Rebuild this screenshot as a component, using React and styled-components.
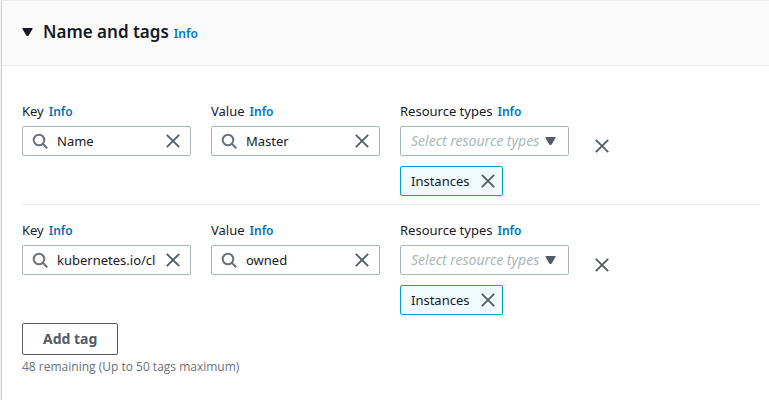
import React, { useState } from "react";
import styled, { createGlobalStyle } from "styled-components";

const GlobalStyle = createGlobalStyle`
  *, *::before, *::after { box-sizing: border-box; }
  body {
    margin: 0;
    background: #fff;
    color: #16191f;
    font-family: "Noto Sans", "Open Sans", sans-serif;
    font-size: 13px;
    line-height: 20px;
  }
  button, input, select { font: inherit; color: inherit; }
`;

const Page = styled.main`
  background: #f2f3f3;
  padding-left: 1px;
`;

const Panel = styled.section`
  min-height: 100vh;
  background: #fff;
  border-top: 1px solid #eaeded;
  border-left: 1px solid #c9cfcf;
`;

const PanelHeader = styled.header`
  display: flex;
  align-items: center;
  gap: 10px;
  height: 65px;
  padding: 0 20px 2px;
  background: #fafafa;
  border-bottom: 1px solid #eaeded;
`;

const IconButton = styled.button`
  display: flex;
  flex: none;
  padding: 0;
  border: 0;
  background: none;
  color: ${(p) => p.$color || "#545b64"};
  cursor: pointer;
`;

const Heading = styled.div`
  display: flex;
  align-items: baseline;
  gap: 5px;
`;

const Title = styled.h2`
  margin: 0;
  font-size: 17px;
  line-height: 24px;
  font-weight: 600;
`;

const InfoLink = styled.a`
  color: #0073bb;
  font-size: 12px;
  font-weight: 600;
  text-decoration: none;
`;

const PanelBody = styled.div`
  padding: 35px 10px 20px 20px;
`;

const TagRow = styled.div`
  display: grid;
  grid-template-columns: repeat(4, minmax(0, 1fr));
  column-gap: 20px;
  padding-right: 1px;
  padding-bottom: 8px;
  & + & {
    border-top: 1px solid #eaeded;
    padding-top: 15px;
  }
`;

const LabelLine = styled.div`
  display: flex;
  align-items: baseline;
  gap: 5px;
  height: 20px;
  margin-bottom: 5px;
  white-space: nowrap;
`;

const Control = styled.div`
  display: flex;
  align-items: center;
  gap: 9px;
  height: 30px;
  padding: 0 9px;
  border: 1px solid #aab7b8;
  border-radius: 2px;
  background: #fff;
`;

const TextInput = styled.input`
  flex: 1;
  min-width: 0;
  height: 22px;
  padding: 0;
  border: 0;
  outline: 0;
  background: none;
`;

const SelectBox = styled.div`
  display: grid;
  align-items: center;
  & > * { grid-area: 1 / 1; }
  & > svg {
    justify-self: end;
    margin-right: 13px;
    pointer-events: none;
    color: #545b64;
  }
`;

const Select = styled.select`
  appearance: none;
  width: 100%;
  height: 30px;
  padding: 0 24px 0 10px;
  border: 1px solid #aab7b8;
  border-radius: 2px;
  background: #fff;
  color: #aab7b8;
  font-size: 14px;
  font-style: italic;
`;

const Token = styled.div`
  display: inline-flex;
  align-items: center;
  gap: 10px;
  height: 30px;
  margin-top: 10px;
  padding: 0 6px 0 10px;
  border: 1px solid #00a1c9;
  border-radius: 2px;
  background: #f1faff;
  vertical-align: top;
`;

const RemoveCell = styled.div`
  padding: 37px 0 0 5px;
`;

const AddButton = styled.button`
  display: block;
  height: 32px;
  padding: 0 20px;
  border: 1px solid #545b64;
  border-radius: 2px;
  background: #fff;
  color: #545b64;
  font-size: 14px;
  font-weight: 700;
  cursor: pointer;
`;

const Hint = styled.p`
  margin: 2px 0 0;
  color: #687078;
  font-family: "Open Sans", "Noto Sans", sans-serif;
  font-size: 12px;
`;

const CaretIcon = () => (
  <svg width="11" height="8" viewBox="0 0 11 8" aria-hidden="true">
    <path d="M0.5 0H10.5V1L6.8 7.2Q5.5 9 4.2 7.2L0.5 1Z" fill="currentColor" />
  </svg>
);

const CloseIcon = () => (
  <svg width="16" height="16" viewBox="0 0 16 16" fill="none" stroke="currentColor" strokeWidth="1.8" aria-hidden="true">
    <path d="M1.8 1.8L14.2 14.2M14.2 1.8L1.8 14.2" />
  </svg>
);

const SearchIcon = () => (
  <svg width="16" height="16" viewBox="0 0 16 16" fill="none" stroke="#687078" strokeWidth="2" aria-hidden="true">
    <circle cx="7" cy="7" r="5.3" />
    <path d="M10.8 10.8L15.2 15.2" />
  </svg>
);

function FieldLabel({ id, children }) {
  return (
    <LabelLine>
      <label htmlFor={id}>{children}</label>
      <InfoLink href="#info">Info</InfoLink>
    </LabelLine>
  );
}

function SearchField({ id, label, initial }) {
  const [value, setValue] = useState(initial);
  return (
    <div>
      <FieldLabel id={id}>{label}</FieldLabel>
      <Control>
        <SearchIcon />
        <TextInput id={id} value={value} onChange={(e) => setValue(e.target.value)} />
        <IconButton type="button" aria-label={`Clear ${label}`} onClick={() => setValue("")}>
          <CloseIcon />
        </IconButton>
      </Control>
    </div>
  );
}

const tags = [
  { key: "Name", value: "Master" },
  { key: "kubernetes.io/cluster", value: "owned" },
];

export default function App() {
  return (
    <>
      <GlobalStyle />
      <Page>
        <Panel>
          <PanelHeader>
            <IconButton type="button" aria-label="Collapse section" $color="#16191f">
              <CaretIcon />
            </IconButton>
            <Heading>
              <Title>Name and tags</Title>
              <InfoLink href="#info">Info</InfoLink>
            </Heading>
          </PanelHeader>
          <PanelBody>
            {tags.map((tag, i) => (
              <TagRow key={tag.key}>
                <SearchField id={`key-${i}`} label="Key" initial={tag.key} />
                <SearchField id={`value-${i}`} label="Value" initial={tag.value} />
                <div>
                  <FieldLabel id={`types-${i}`}>Resource types</FieldLabel>
                  <SelectBox>
                    <Select id={`types-${i}`} defaultValue="">
                      <option value="">Select resource types</option>
                      <option value="instances">Instances</option>
                    </Select>
                    <CaretIcon />
                  </SelectBox>
                  <Token>
                    Instances
                    <IconButton type="button" aria-label="Remove Instances">
                      <CloseIcon />
                    </IconButton>
                  </Token>
                </div>
                <RemoveCell>
                  <IconButton type="button" aria-label="Remove tag">
                    <CloseIcon />
                  </IconButton>
                </RemoveCell>
              </TagRow>
            ))}
            <AddButton type="button">Add tag</AddButton>
            <Hint>48 remaining (Up to 50 tags maximum)</Hint>
          </PanelBody>
        </Panel>
      </Page>
    </>
  );
}
